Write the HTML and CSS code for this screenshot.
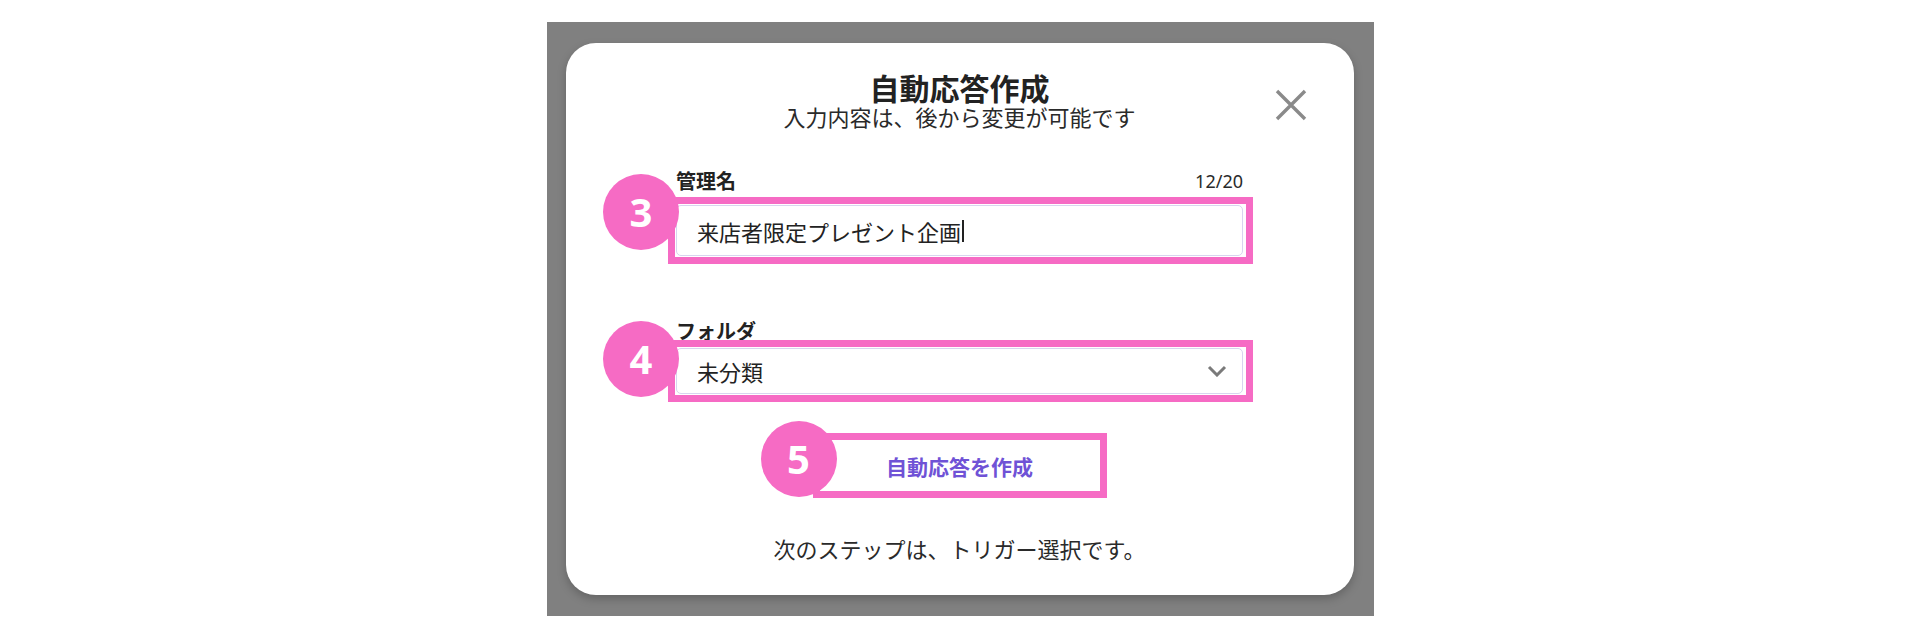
FILE: index.html
```html
<!DOCTYPE html>
<html lang="ja">
<head>
<meta charset="utf-8">
<title>自動応答作成</title>
<link rel="stylesheet" href="styles.css">
</head>
<body>
<div class="backdrop">
  <div class="modal">
    <div class="header">
      <div class="header-spacer"></div>
      <div class="heading">
        <h1 class="title">自動応答作成</h1>
        <p class="subtitle">入力内容は、後から変更が可能です</p>
      </div>
      <div class="close-cell">
        <button class="close" type="button" aria-label="閉じる">
          <svg width="34" height="34" viewBox="0 0 34 34"><path d="M3 3 L31 31 M31 3 L3 31" stroke="#8a8a8a" stroke-width="3.4" fill="none"/></svg>
        </button>
      </div>
    </div>

    <div class="form">
      <div class="field field-name">
        <div class="label-row">
          <span class="label">管理名</span>
          <span class="counter">12/20</span>
        </div>
        <div class="annot annot-input">
          <span class="badge badge-3">3</span>
          <div class="box input-box">
            <span class="value">来店者限定プレゼント企画</span><span class="caret"></span>
          </div>
        </div>
      </div>

      <div class="field field-folder">
        <div class="label-row">
          <span class="label">フォルダ</span>
        </div>
        <div class="annot annot-select">
          <span class="badge badge-4">4</span>
          <div class="box select-box">
            <span class="value">未分類</span>
            <svg class="chevron" width="20" height="12" viewBox="0 0 20 12"><polyline points="2,2 10,10 18,2" stroke="#7a7a7a" stroke-width="3" fill="none"/></svg>
          </div>
        </div>
      </div>

      <div class="actions">
        <button class="submit" type="button">
          <span class="badge badge-5">5</span>
          自動応答を作成
        </button>
      </div>

      <p class="note">次のステップは、トリガー選択です。</p>
    </div>
  </div>
</div>
</body>
</html>
```

FILE: styles.css
```css
* { box-sizing: border-box; }

body {
  margin: 0;
  background: #ffffff;
  font-family: "Noto Sans CJK JP", "Noto Sans", sans-serif;
  color: #222;
}

.backdrop {
  width: 827px;
  margin: 22px auto 0;
  padding: 21px 20px 21px 19px;
  background: #808080;
}

.modal {
  width: 788px;
  background: #fff;
  border-radius: 30px;
  padding: 28px 0 34px;
  box-shadow: 0 4px 10px rgba(0, 0, 0, 0.22);
}

.header {
  display: grid;
  grid-template-columns: 1fr auto 1fr;
  padding: 0 46px;
}

.heading { text-align: center; }

.title {
  margin: 0;
  font-size: 30px;
  line-height: 32px;
  font-weight: 700;
  color: #222;
}

.subtitle {
  margin: 0;
  font-size: 22px;
  line-height: 26px;
  color: #2a2a2a;
}

.close-cell {
  display: flex;
  justify-content: flex-end;
  align-items: flex-start;
}

.close {
  margin-top: 17px;
  padding: 0;
  border: 0;
  background: none;
  width: 34px;
  height: 34px;
  display: block;
}
.close svg { display: block; }

.form {
  width: 567px;
  margin: 0 auto;
}

.field-name { margin-top: 40px; }
.field-folder { margin-top: 55px; }

.label-row {
  display: flex;
  justify-content: space-between;
  align-items: flex-end;
  height: 24px;
}

.label {
  font-size: 20px;
  line-height: 24px;
  font-weight: 700;
  color: #222;
}

.counter {
  font-family: "Noto Sans", "Liberation Sans", sans-serif;
  font-size: 18px;
  line-height: 24px;
  color: #2a2a2a;
}

.annot {
  position: relative;
  margin-left: -8px;
  margin-right: -10px;
  border: 7px solid #f66bc4;
  padding: 1px 3px 1px 1px;
}

.annot-input { margin-top: 4px; }
.annot-select { margin-top: -3px; }

.box {
  display: flex;
  align-items: center;
  border: 1px solid #d8d5ef;
  border-radius: 5px;
  background: #fff;
  padding: 0 15px 0 20px;
  font-size: 22px;
  color: #222;
}

.input-box { height: 51px; }

.select-box {
  height: 46px;
  justify-content: space-between;
}

.caret {
  display: inline-block;
  width: 2px;
  height: 22px;
  background: #222;
  margin-left: 1px;
}

.chevron { display: block; }

.badge {
  position: absolute;
  z-index: 2;
  width: 76px;
  height: 76px;
  border-radius: 50%;
  background: #f66bc4;
  color: #fff;
  font-family: "Noto Sans", sans-serif;
  font-weight: 700;
  font-size: 40px;
  line-height: 76px;
  text-align: center;
}

.badge-3 { left: -72px; top: -30px; }
.badge-4 { left: -72px; top: -26px; }
.badge-5 { left: -59px; top: -19px; }

.actions {
  display: flex;
  justify-content: center;
  margin-top: 31px;
}

.submit {
  position: relative;
  width: 294px;
  height: 65px;
  border: 7px solid #f66bc4;
  background: #fff;
  color: #6f52d6;
  font-family: "Noto Sans CJK JP", sans-serif;
  font-size: 21px;
  font-weight: 700;
  padding: 0;
}

.note {
  margin: 37px 0 0;
  text-align: center;
  font-size: 22px;
  line-height: 26px;
  color: #2a2a2a;
}
```
